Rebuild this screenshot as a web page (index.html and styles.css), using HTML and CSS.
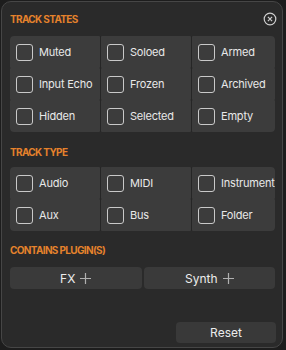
FILE: index.html
```html
<!DOCTYPE html>
<html lang="en">

<head>
    <meta charset="UTF-8">
    <title>Track Filter</title>
    <link rel="stylesheet" href="styles.css">
</head>

<body>

    <div class="panel">
        <div class="header">
            <h2 class="section-title">Track States</h2>
            <button class="close" aria-label="Close">
                <svg width="14" height="14" viewBox="0 0 14 14">
                    <circle cx="7" cy="7" r="5.8" fill="none" stroke="#cfcfcf" stroke-width="1.2" />
                    <path d="M4.9 4.9 L9.1 9.1 M9.1 4.9 L4.9 9.1" stroke="#cfcfcf" stroke-width="1.2" />
                </svg>
            </button>
        </div>

        <div class="grid">
            <label class="cell"><span class="box"></span>Muted</label>
            <label class="cell"><span class="box"></span>Soloed</label>
            <label class="cell"><span class="box"></span>Armed</label>
            <label class="cell"><span class="box"></span>Input Echo</label>
            <label class="cell"><span class="box"></span>Frozen</label>
            <label class="cell"><span class="box"></span>Archived</label>
            <label class="cell"><span class="box"></span>Hidden</label>
            <label class="cell"><span class="box"></span>Selected</label>
            <label class="cell"><span class="box"></span>Empty</label>
        </div>

        <h2 class="section-title sub">Track Type</h2>
        <div class="grid">
            <label class="cell"><span class="box"></span>Audio</label>
            <label class="cell"><span class="box"></span>MIDI</label>
            <label class="cell"><span class="box"></span>Instrument</label>
            <label class="cell"><span class="box"></span>Aux</label>
            <label class="cell"><span class="box"></span>Bus</label>
            <label class="cell"><span class="box"></span>Folder</label>
        </div>

        <h2 class="section-title sub last">Contains Plugin(s)</h2>
        <div class="plugins">
            <button class="plugin">FX
                <svg class="plus" width="11" height="11" viewBox="0 0 11 11">
                    <path d="M5.5 0 V11 M0 5.5 H11" stroke="#b0b0b0" stroke-width="1.2" />
                </svg>
            </button>
            <button class="plugin">Synth
                <svg class="plus" width="11" height="11" viewBox="0 0 11 11">
                    <path d="M5.5 0 V11 M0 5.5 H11" stroke="#b0b0b0" stroke-width="1.2" />
                </svg>
            </button>
        </div>

        <div class="footer">
            <button class="reset">Reset</button>
        </div>
    </div>

</body>

</html>
```

FILE: styles.css
```css
body {
    margin: 0;
    background-color: #1d1d1d;
    font-family: Inter, 'Noto Sans', sans-serif;
    color: #e4e4e4;
}

.panel {
    box-sizing: border-box;
    width: 282px;
    height: 347px;
    margin: 1px;
    padding: 0 7px 0 8px;
    background-color: #2a2a2a;
    border: 1px solid #464646;
    border-radius: 10px;
}

.header {
    height: 34px;
    display: flex;
    align-items: center;
    justify-content: space-between;
}

.section-title {
    margin: 0;
    font-size: 10px;
    line-height: 12px;
    font-weight: 700;
    letter-spacing: -0.65px;
    text-transform: uppercase;
    color: #e5822c;
}

.section-title.sub {
    padding-top: 14px;
    margin-bottom: 9px;
}

.section-title.last {
    padding-top: 13px;
    margin-bottom: 11px;
}

.close {
    width: 14px;
    height: 14px;
    margin-right: -2px;
    padding: 0;
    border: none;
    background: none;
    display: flex;
}

.grid {
    display: grid;
    grid-template-columns: 90px 90px 83px;
    column-gap: 1px;
    background-color: #262626;
    border-radius: 4px;
    overflow: hidden;
}

.cell {
    height: 32px;
    display: flex;
    align-items: center;
    gap: 6px;
    padding-left: 6px;
    background-color: #3c3c3c;
    border-radius: 1px;
    font-size: 11px;
    letter-spacing: -0.2px;
    color: #e8e8e8;
    white-space: nowrap;
    overflow: hidden;
}

.box {
    box-sizing: border-box;
    flex: none;
    width: 17px;
    height: 17px;
    border: 1.3px solid #c9c9c9;
    border-radius: 3px;
}

.plugins {
    display: flex;
    gap: 2px;
}

.plugin {
    flex: 1;
    height: 22px;
    padding: 0;
    border: none;
    border-radius: 4px;
    background-color: #3a3a3a;
    color: #ececec;
    font-family: inherit;
    font-size: 12px;
    display: flex;
    align-items: center;
    justify-content: center;
    gap: 5px;
}

.plus {
    flex: none;
}

.footer {
    display: flex;
    justify-content: flex-end;
    margin-top: 33px;
    margin-right: -1px;
}

.reset {
    width: 100px;
    height: 21px;
    padding: 0;
    border: none;
    border-radius: 4px;
    background-color: #393939;
    color: #ececec;
    font-family: inherit;
    font-size: 12px;
}
```
